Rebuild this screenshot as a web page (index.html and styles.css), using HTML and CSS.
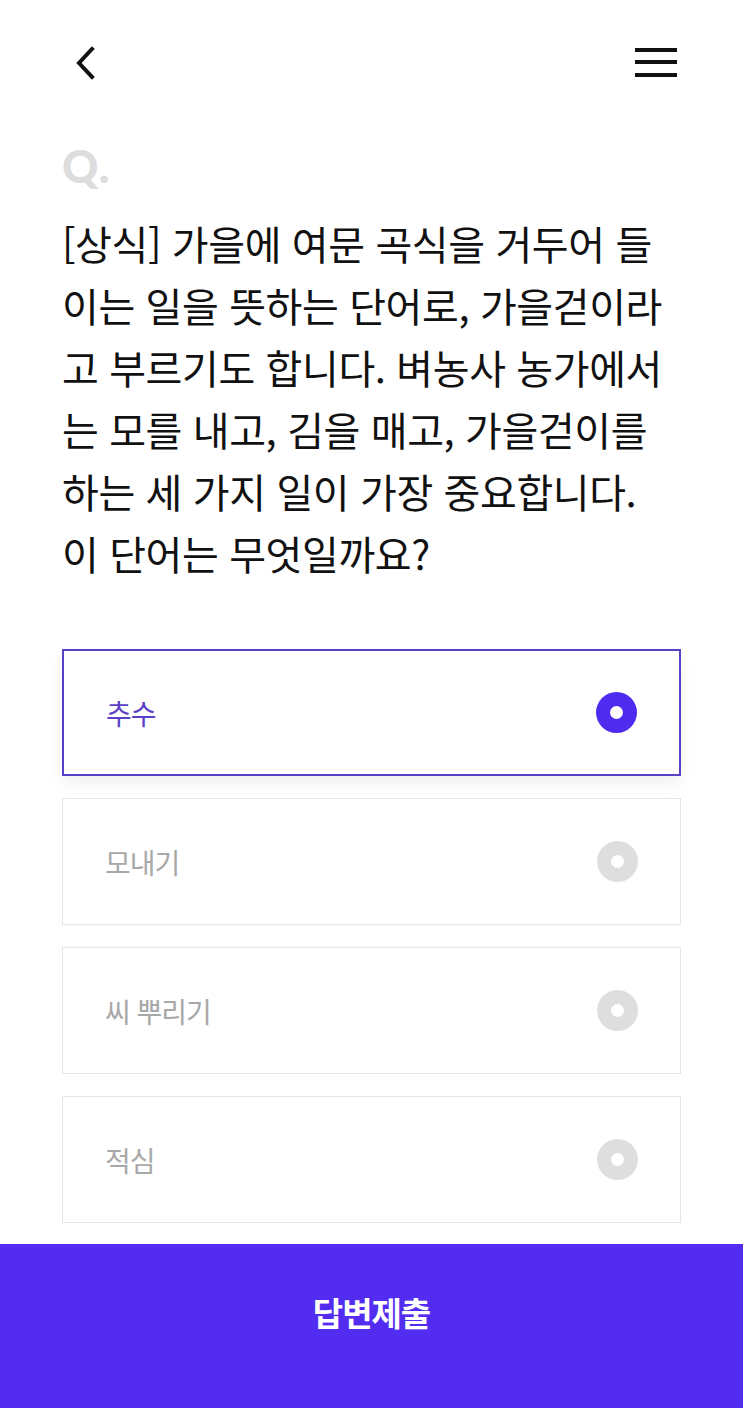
FILE: index.html
```html
<!DOCTYPE html>
<html lang="ko">
<head>
    <meta charset="UTF-8">
    <meta name="viewport" content="width=device-width, initial-scale=1.0">
    <title>퀴즈</title>
    <link rel="stylesheet" href="styles.css">
</head>
<body>
    <header class="top-bar">
        <button class="icon-btn" aria-label="뒤로">
            <svg width="22" height="34" viewBox="0 0 22 34">
                <path d="M18 3 L5 17 L18 31" fill="none" stroke="#111" stroke-width="4" stroke-linecap="square"/>
            </svg>
        </button>
        <button class="icon-btn" aria-label="메뉴">
            <svg width="42" height="32" viewBox="0 0 42 32">
                <rect x="0" y="2" width="42" height="4" fill="#111"/>
                <rect x="0" y="14" width="42" height="4" fill="#111"/>
                <rect x="0" y="27" width="42" height="4" fill="#111"/>
            </svg>
        </button>
    </header>

    <main class="quiz">
        <div class="q-mark">Q.</div>
        <p class="question">
            <span>[상식] 가을에 여문 곡식을 거두어 들</span>
            <span>이는 일을 뜻하는 단어로, 가을걷이라</span>
            <span>고 부르기도 합니다. 벼농사 농가에서</span>
            <span>는 모를 내고, 김을 매고, 가을걷이를</span>
            <span>하는 세 가지 일이 가장 중요합니다.</span>
            <span>이 단어는 무엇일까요?</span>
        </p>

        <ul class="options">
            <li class="option selected">
                <span class="label">추수</span>
                <span class="radio"></span>
            </li>
            <li class="option">
                <span class="label">모내기</span>
                <span class="radio"></span>
            </li>
            <li class="option">
                <span class="label">씨 뿌리기</span>
                <span class="radio"></span>
            </li>
            <li class="option">
                <span class="label">적심</span>
                <span class="radio"></span>
            </li>
        </ul>
    </main>

    <button class="submit">답변제출</button>
</body>
</html>
```

FILE: styles.css
```css
:root {
    --primary: #522cf0;
    --selected-border: #5b3fc6;
    --text: #111111;
    --muted: #a8a8a8;
    --line: #e6e6e6;
}

* {
    margin: 0;
    padding: 0;
    box-sizing: border-box;
}

body {
    font-family: "Noto Sans CJK KR", "Noto Sans", sans-serif;
    background: #ffffff;
    color: var(--text);
    width: 743px;
    min-height: 1408px;
    display: flex;
    flex-direction: column;
}

.top-bar {
    height: 125px;
    display: flex;
    justify-content: space-between;
    align-items: flex-start;
    padding: 46px 66px 0 74px;
}

.icon-btn {
    background: none;
    border: none;
    display: block;
    line-height: 0;
}

.quiz {
    flex: 1;
    padding: 0 62px;
}

.q-mark {
    font-family: "Lato", "Noto Sans", sans-serif;
    font-weight: 900;
    font-size: 45px;
    line-height: 44px;
    color: #dddddd;
    letter-spacing: 1px;
    margin-top: 19px;
}

.question {
    margin-top: 24px;
    font-size: 40px;
    line-height: 62px;
    letter-spacing: -0.4px;
    font-weight: 400;
}

.question span {
    display: block;
    white-space: nowrap;
}

.options {
    list-style: none;
    margin-top: 65px;
    display: flex;
    flex-direction: column;
    gap: 22px;
}

.option {
    height: 127px;
    border: 1px solid var(--line);
    display: flex;
    align-items: center;
    justify-content: space-between;
    padding: 0 42px 0 42px;
}

.option .label {
    font-size: 28px;
    color: var(--muted);
    letter-spacing: -1px;
}

.radio {
    width: 41px;
    height: 41px;
    border-radius: 50%;
    background: #dedede;
    position: relative;
}

.radio::after {
    content: "";
    position: absolute;
    width: 13px;
    height: 13px;
    border-radius: 50%;
    background: #ffffff;
    top: 14px;
    left: 14px;
}

.option.selected {
    border: 2px solid var(--selected-border);
    box-shadow: 0 8px 14px rgba(0, 0, 0, 0.06);
}

.option.selected .label {
    color: var(--selected-border);
}

.option.selected .radio {
    background: #4f2bf0;
}

.submit {
    margin-top: 21px;
    height: 165px;
    width: 100%;
    border: none;
    background: var(--primary);
    color: #ffffff;
    font-family: "Noto Sans CJK KR", "Noto Sans", sans-serif;
    font-size: 33px;
    font-weight: 700;
    letter-spacing: -1px;
    padding-bottom: 30px;
}
```
